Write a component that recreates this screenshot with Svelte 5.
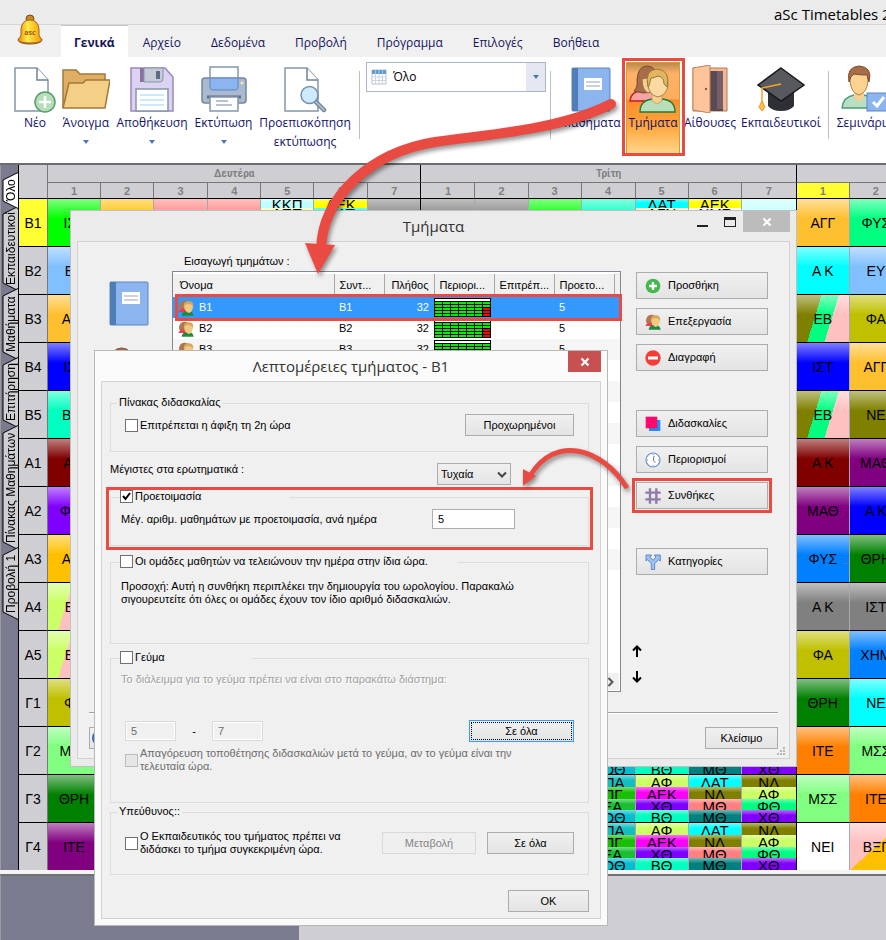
<script>
  const menu = ['Γενικά', 'Αρχείο', 'Δεδομένα', 'Προβολή', 'Πρόγραμμα', 'Επιλογές', 'Βοήθεια'];

  const sideTabs = [
    { label: 'Όλο', h: 37, active: true },
    { label: 'Εκπαιδευτικοί', h: 85 },
    { label: 'Μαθήματα', h: 72 },
    { label: 'Επιτήρηση', h: 71 },
    { label: 'Πίνακας Μαθημάτων', h: 125 },
    { label: 'Προβολή 1', h: 73 }
  ];

  const colWidths = [30, 53, 53, 54, 53, 53, 54, 53, 54, 53, 53, 54, 53, 53, 55, 53, 53];
  const hours = [1, 2, 3, 4, 5, 6, 7, 1, 2, 3, 4, 5, 6, 7, 1, 2];

  const c = {
    amber: '#ffc030', lime: '#00ff00', sky: '#80c0ff', blue: '#0000ff', mint: '#00ffc0', maroon: '#800000',
    violet: '#8000ff', gold: '#ffc000', olive: '#808000', mustard: '#c0c000', pale: '#80ff80', green: '#008000',
    purple: '#800080', spring: '#00ff80', cyan: '#00ffff', azure: '#0080ff', gray: '#808080', orange: '#ff8000',
    white: '#ffffff', pink: '#ffc0c0', rose: '#ff8080', teal: '#008080', yellow: '#ffff00', magenta: '#ff00ff', chartreuse: '#ccff66'
  };
  const stripes = `linear-gradient(107deg, ${c.olive} 37%, ${c.spring} 37%, ${c.spring} 63%, ${c.pink} 63%)`;
  const halves = `linear-gradient(107deg, ${c.chartreuse} 37%, ${c.pink} 37%)`;
  const corner = `linear-gradient(to bottom right, ${c.pink} 50%, ${c.gold} 50%)`;

  const quad = [
    [['ΦΠΑ', '#10c0c0'], ['ΑΠΓ', '#18c000'], ['ΓΕΑ', '#18c030'], ['ΦΟΘ', '#00c0d0']],
    [['ΑΦ', c.chartreuse], ['ΑΕΚ', c.magenta], ['ΧΘ', c.violet], ['ΒΘ', c.mint]],
    [['ΛΑΤ', c.cyan], ['ΝΛ', c.olive], ['ΜΘ', c.rose], ['ΜΘ', c.teal]],
    [['ΝΛ', c.olive], ['ΑΦ', c.chartreuse], ['ΦΘ', c.spring], ['ΧΘ', c.violet]]
  ];
  const five = (a, b) => [a, b, ['', c.gray], ['', c.gray], ['', c.gray]];
  const firstRow = [
    ['', c.gold], ['', c.rose], ['', c.rose],
    five(['ΚΚΠ', '#c0ffff'], ['ΑΕΠ', '#ffff99']),
    five(['ΑΕΚ', c.yellow], ['ΛΑΤ', c.cyan]),
    ['', c.gray], ['', c.gray], ['', c.gray], ['', '#00ff00'], ['', '#00ffc0'],
    five(['ΛΑΤ', c.cyan], ['ΑΓΝ', '#ffff99']),
    five(['ΑΕΚ', c.yellow], ['ΝΜΣ', c.white]),
    ['', '#c0ffff']
  ];
  const plain = Array.from({ length: 13 }, () => ['', '#ceced3']);
  const quads = [...plain.slice(0, 9), ...quad];

  const rows = [
    { name: 'B1', first: ['ΙΣΤ', c.lime], mid: firstRow, last: [['ΑΓΓ', c.amber], ['ΦΥΣ', c.spring]], active: true },
    { name: 'B2', first: ['ΕΥ', c.sky], mid: plain, last: [['Α Κ', c.cyan], ['ΕΥ', c.sky]] },
    { name: 'B3', first: ['ΑΓΓ', c.amber], mid: plain, last: [['ΕΒ', stripes], ['ΦΑ', c.mustard]] },
    { name: 'B4', first: ['ΙΣΤ', c.blue], mid: plain, last: [['ΙΣΤ', c.blue], ['ΑΓΓ', c.amber]] },
    { name: 'B5', first: ['ΒΙΟ', c.mint], mid: plain, last: [['ΕΒ', stripes], ['ΝΕ', c.olive]] },
    { name: 'A1', first: ['Α Κ', c.maroon], mid: plain, last: [['Α Κ', c.maroon], ['ΜΑΘ', c.purple]] },
    { name: 'A2', first: ['ΦΥΣ', c.violet], mid: plain, last: [['ΜΑΘ', c.purple], ['Α Κ', c.blue]] },
    { name: 'A3', first: ['ΑΓΓ', c.gold], mid: plain, last: [['ΦΥΣ', c.azure], ['ΘΡΗ', c.green]] },
    { name: 'A4', first: ['ΕΒ', halves], mid: plain, last: [['Α Κ', c.gray], ['ΙΣΤ', c.gray]] },
    { name: 'A5', first: ['ΕΒ', halves], mid: plain, last: [['ΦΑ', c.mustard], ['ΧΗΜ', c.azure]] },
    { name: 'Γ1', first: ['ΦΑ', c.mustard], mid: plain, last: [['ΘΡΗ', c.green], ['ΝΕ', c.cyan]] },
    { name: 'Γ2', first: ['ΜΣΣ', c.pale], mid: quads, last: [['ΙΤΕ', c.orange], ['ΜΣΣ', c.pale]] },
    { name: 'Γ3', first: ['ΘΡΗ', c.green], mid: quads, last: [['ΜΣΣ', c.pale], ['ΙΤΕ', c.orange]] },
    { name: 'Γ4', first: ['ΙΤΕ', c.purple], mid: quads, last: [['ΝΕΙ', c.white], ['ΒΞΓ', corner]] }
  ];

  const columns = ['Όνομα', 'Συντ...', 'Πλήθος', 'Περιορι...', 'Επιτρέπ...', 'Προετο...', ''];
  const classes = ['B1', 'B2', 'B3'];
  const blanks = Array.from({ length: 10 });

  const actions = [
    [['add', 'Προσθήκη'], ['people', 'Επεξεργασία'], ['remove', 'Διαγραφή']],
    [['lessons', 'Διδασκαλίες'], ['clock', 'Περιορισμοί'], ['hash', 'Συνθήκες']],
    [['fork', 'Κατηγορίες']]
  ];

  let prep = $state(true);
</script>

{#snippet art(name, size)}
  <svg class="art" width={size} height={size} viewBox="0 0 48 48" aria-hidden="true">
    {#if name === 'new' || name === 'preview'}
      <path d="M4 3h22l11 12v31H4z" fill="#fff" stroke="#8597aa" stroke-width="1.5" />
      <path d="M26 3v12h11" fill="#fff" stroke="#6f8296" stroke-width="1.5" />
      {#if name === 'new'}
        <circle cx="34" cy="37" r="10" fill="#b5dfb9" stroke="#5d9a72" stroke-width="1.5" />
        <path d="M34 31v12M28 37h12" stroke="#fff" stroke-width="2.5" />
      {:else}
        <path d="M34 36l9 9" stroke="#6d8094" stroke-width="4.5" stroke-linecap="round" />
        <path d="M34 36l9 9" stroke="#a9bacb" stroke-width="2" stroke-linecap="round" />
        <circle cx="28.500" cy="30" r="8.500" fill="#cfe9fd" stroke="#7590aa" stroke-width="1.500" />
      {/if}
    {:else if name === 'open'}
      <path d="M1 43V5h13l4 4h25v7" fill="#dfae62" stroke="#a07a3c" stroke-width="1.5" />
      <path d="M1 43l6-25h14l3-3h24l-5 28z" fill="#f4cf86" stroke="#a07a3c" stroke-width="1.5" />
    {:else if name === 'save'}
      <path d="M3 3h34l8 9v34H3z" fill="#dcd2f2" stroke="#9d86bd" stroke-width="1.5" />
      <path d="M12 3h4v14h-4z" fill="#8a709f" /><path d="M16 3h19v10q0 4-3 4H16z" fill="#c5cbd7" stroke="#8597aa" />
      <path d="M28 6h4v8h-4z" fill="#5e6d82" />
      <path d="M8 24h32v22H8z" fill="#fff" stroke="#8597aa" stroke-width="1.5" />
      <path d="M12 30h24M12 35h24M12 40h24" stroke="#bfe2fb" stroke-width="1.5" />
    {:else if name === 'print'}
      <rect x="2" y="13" width="44" height="25" rx="3" fill="#aabace" stroke="#7186a0" stroke-width="1.500" />
      <path d="M10 2h28v11H10z" fill="#fff" stroke="#8597aa" stroke-width="1.5" />
      <path d="M10 13h28v9q0 3-3 3H13q-3 0-3-3z" fill="#8cb4ee" stroke="#5d86c8" />
      <path d="M7 32h34" stroke="#5f7186" stroke-width="3" /><circle cx="42" cy="18" r="1.500" fill="#ffe9a0" />
      <path d="M10 32h28v14H10z" fill="#fff" stroke="#8597aa" stroke-width="1.5" /><path d="M16 36h12M16 40h16" stroke="#7186a0" />
    {:else if name === 'book'}
      <rect x="5" y="3" width="38" height="43" rx="1" fill="#8cb4ee" stroke="#5c86c0" />
      <path d="M5 3h6v43H5z" fill="#4f7db8" /><path d="M17 13h18v12H17z" fill="#fff" /><path d="M19 17h14M19 21h14" stroke="#b9c4d8" stroke-width="1.500" />
    {:else if name === 'class'}
      <path d="M1 36q1-10 12-10h13l-3 10z" fill="#f5a3a3" stroke="#c81820" stroke-width="1.300" />
      <path d="M5 26q4-4 3-11Q9 1 18 1q9 0 10 11l-3 15-11 1z" fill="#a76c48" stroke="#7b4a2c" />
      <path d="M13 14q5 0 8-4l2 4v12l-4 2q-6-3-6-14z" fill="#f6cf94" stroke="#9a7045" />
      <path d="M11 47q0-12 13-13l3 3h3l3-3q13 1 13 13z" fill="#b8dfb9" stroke="#1f7d33" stroke-width="1.300" />
      <path d="M23 26h10v10l-5 3-5-3z" fill="#f6cf94" stroke="#c09a55" stroke-width=".7" />
      <path d="M19 20q-1-13 10-15 10 1 10 15-1 10-10 12-9-2-10-12z" fill="#fbd9a2" stroke="#a98245" />
      <path d="M19 22Q15 5 28 4q14 1 10 18l-3-3q0-7-6-8-4 2-7 2-1 3-2 8z" fill="#e5b45f" stroke="#8d7a35" />
    {:else if name === 'door'}
      <path d="M7 3h34v43H7z" fill="#f7b891" stroke="#b07a5a" /><path d="M23 6h14v40H23z" fill="#5c4a51" /><path d="M31 6h6v38h-6z" fill="#74606a" />
      <path d="M7 3l17-3v48L7 45z" fill="#ffc49c" stroke="#bd8560" /><circle cx="20" cy="24" r="1.200" fill="#8f5f42" />
    {:else if name === 'cap'}
      <path d="M11 24h26v17q-4 5-13 5t-13-5z" fill="#2f3035" /><path d="M24 3l23 17-23 16L1 20z" fill="#58595e" stroke="#19191c" stroke-width="1.500" />
      <path d="M24 19L5 23v15" fill="none" stroke="#f5a623" stroke-width="1.500" /><path d="M5 36l3 6-3 4-3-4z" fill="#ffc04d" stroke="#e8951a" />
    {:else if name === 'seminar'}
      <path d="M1 43q1-11 12-13h10q9 1 11 13z" fill="#b8dfc4" stroke="#4d9b70" stroke-width="1.300" />
      <path d="M13 24h10v9l-5 4-5-4z" fill="#f6cf94" /><path d="M9 16q0-13 9-13t9 13q-1 12-9 14-8-2-9-14z" fill="#fbd28f" stroke="#a98245" />
      <path d="M8 17Q5 2 18 1q14 1 10 16l-2-7q-8 0-13-1-4 2-5 8z" fill="#a76c48" stroke="#7b4a2c" />
      <rect x="26" y="28" width="22" height="18" fill="#8cb4ee" stroke="#5c86c0" /><path d="M32 37l4 4 7-9" fill="none" stroke="#fff" stroke-width="3" />
    {:else if name === 'add'}
      <circle cx="24" cy="24" r="22" fill="#43b94c" /><path d="M24 12v24M12 24h24" stroke="#fff" stroke-width="7" />
    {:else if name === 'remove'}
      <circle cx="24" cy="24" r="23" fill="#f53d36" /><path d="M9 24h30" stroke="#fff" stroke-width="9" />
    {:else if name === 'people'}
      <path d="M3 22Q4 1 20 2q14 0 14 14l-6 14H6z" fill="#b0774e" /><path d="M1 36q4-10 16-10l10 10z" fill="#f03a55" />
      <path d="M11 47q1-14 17-15 17 0 19 15z" fill="#208a3c" /><path d="M18 16q2-11 14-11t13 12q0 18-13 22-13-4-14-23z" fill="#f2c983" />
      <path d="M17 20q0-16 15-16t14 16q-5-8-15-8-9 0-14 8z" fill="#d9a75c" />
    {:else if name === 'lessons'}
      <path d="M12 12h34v33H12z" fill="#1492ff" /><path d="M2 2h35v35H2z" fill="#ff0a6c" />
    {:else if name === 'clock'}
      <circle cx="24" cy="24" r="21" fill="#fff" stroke="#6b8fc8" stroke-width="3.500" /><path d="M27 11l-2 14 6 7" fill="none" stroke="#55789f" stroke-width="3" />
      <path d="M24 6v3M24 39v3M6 24h3M39 24h3" stroke="#6b8fc8" stroke-width="3" />
    {:else if name === 'hash'}
      <path d="M15 1v46M34 1v46M1 14h46M1 34h46" stroke="#8f7aa8" stroke-width="7" />
    {:else if name === 'fork'}
      <path d="M19 47V29L8 17l-5 4V3h17l-5 6 9 10 9-10-5-6h18v18l-6-4-11 12v18z" fill="#9cc3f3" stroke="#4f79b5" stroke-width="2.500" />
    {/if}
  </svg>
{/snippet}

{#snippet tool(name, label, w, drop)}
  <button class="tool" style:width="{w}px">
    {@render art(name, 48)}
    <span>{label}</span>
    {#if drop}<i class="caret"></i>{/if}
  </button>
{/snippet}

{#snippet cell(data, edge)}
  <td class:edge>
    {#if Array.isArray(data[0])}
      <div class="stack" class:dense={data.length > 4}>
        {#each data as [t, bg]}<span style:background="linear-gradient(#ffffff70, #ffffff00 45%), {bg}">{t}</span>{/each}
      </div>
    {:else}
      <div class="slot" style:background="linear-gradient(#ffffff80, #ffffff00 42%), {data[1]}">{data[0]}</div>
    {/if}
  </td>
{/snippet}

<div class="app">
  <header class="titlebar">aSc Timetables 2</header>
  <button class="bell" aria-label="aSc">
    <svg width="28" height="32" viewBox="0 0 28 32">
      <defs>
        <linearGradient id="brass"><stop offset="0" stop-color="#f08a00" /><stop offset=".4" stop-color="#ffe94a" /><stop offset="1" stop-color="#f59a00" /></linearGradient>
      </defs>
      <ellipse cx="14" cy="26" rx="12" ry="4" fill="#f0900c" stroke="#8a4a20" />
      <circle cx="14" cy="5" r="4" fill="#c98a1c" stroke="#7a4a14" />
      <path d="M5 15q1-9 9-9t9 9v6q1 3 3 5-2 3-12 3T2 26q2-2 3-5z" fill="url(#brass)" stroke="#a0641e" />
      <text x="14" y="21" text-anchor="middle" font-size="7" font-weight="bold" fill="#a05a10">asc</text>
    </svg>
  </button>
  <nav class="menu">
    {#each menu as m, i}<button class:active={i === 0}>{m}</button>{/each}
  </nav>

  <section class="ribbon">
    {@render tool('new', 'Νέο', 46, false)}
    {@render tool('open', 'Άνοιγμα', 50, true)}
    {@render tool('save', 'Αποθήκευση', 76, true)}
    {@render tool('print', 'Εκτύπωση', 61, true)}
    {@render tool('preview', 'Προεπισκόπηση εκτύπωσης', 96, false)}
    <i class="rule"></i>
    <button class="view">
      <svg width="16" height="16" viewBox="0 0 16 16" aria-hidden="true">
        <path d="M1 1h14v14H1z" fill="#fff" stroke="#b4c1cf" /><path d="M1 1h14v4H1z" fill="#5f9bd5" />
        <path d="M1 8h14M1 11.500h14M4.500 1v14M8 1v14M11.500 1v14" stroke="#c0ccd8" stroke-width=".8" />
      </svg>
      <span>Όλο</span>
      <b><i class="caret"></i></b>
    </button>
    <i class="rule near"></i>
    {@render tool('book', 'Μαθήματα', 65, false)}
    <div class="hot">{@render tool('class', 'Τμήματα', 52, false)}</div>
    {@render tool('door', 'Αίθουσες', 54, false)}
    {@render tool('cap', 'Εκπαιδευτικοί', 82, false)}
    <i class="rule"></i>
    {@render tool('seminar', 'Σεμινάρια', 60, false)}
  </section>

  <main class="board">
    <div class="side">
      {#each sideTabs as t}
        <button class:active={t.active} style:height="{t.h}px">
          <svg width="16" height={t.h}>
            <path d="M16 0.500L1 8V{t.h - 8}L16 {t.h - 0.5}" fill={t.active ? '#fff' : '#ceced3'} stroke="#000" />
          </svg>
          <span>{t.label}</span>
        </button>
      {/each}
    </div>
    <div class="sheet">
      <table class="timetable">
        <colgroup>{#each colWidths as w}<col style:width="{w}px" />{/each}</colgroup>
        <thead>
          <tr class="days"><th rowspan="2" class="head"></th><th colspan="7" class="edge">Δευτέρα</th><th colspan="7" class="edge">Τρίτη</th><th colspan="2"></th></tr>
          <tr class="hours">{#each hours as h, i}<th class:edge={i === 6 || i === 13} class:now={i === 14}>{h}</th>{/each}</tr>
        </thead>
        <tbody>
          {#each rows as r}
            <tr>
              <th class:now={r.active}>{r.name}</th>
              {@render cell(r.first, false)}
              {#each r.mid as m, i}{@render cell(m, i === 5 || i === 12)}{/each}
              {#each r.last as l}{@render cell(l, false)}{/each}
            </tr>
          {/each}
        </tbody>
      </table>
    </div>
  </main>
  <footer class="panes"><div></div><div></div></footer>

  <section class="win classes" role="dialog" aria-label="Τμήματα">
    <div class="bar">
      <h2>Τμήματα</h2>
      <button class="ctl min" aria-label="Min"><i></i></button>
      <button class="ctl max" aria-label="Max"><i></i></button>
      <button class="ctl close" aria-label="Close"><svg width="10" height="10" viewBox="0 0 10 10"><path d="M1.500 1.500l7 7M8.500 1.500l-7 7" stroke="#fff" stroke-width="2.200" /></svg></button>
    </div>
    <div class="body">
      <div class="main">
        <div class="pics">{@render art('book', 48)}{@render art('seminar', 44)}</div>
        <div class="listcol">
          <p>Εισαγωγή τμημάτων :</p>
          <div class="list">
            <table>
              <thead><tr>{#each columns as h}<th>{h}</th>{/each}</tr></thead>
              <tbody>
                {#each classes as n, i}
                  <tr class:selected={i === 0}>
                    <td><span class="nm">{@render art('people', 16)}{n}</span></td>
                    <td>{n}</td>
                    <td class="num">32</td>
                    <td class="chart">
                      <svg width="57" height="19" shape-rendering="crispEdges">
                        <rect width="57" height="19" fill="#000" />
                        <rect x="1" y="1" width="55" height="2" fill="#fff" />
                        {#each [0, 1, 2, 3, 4, 5, 6] as x}
                          {#each [0, 1, 2, 3, 4] as y}
                            <rect x={1 + x * 8} y={4 + y * 3} width="7" height="2" fill={x === 6 && y > 1 ? '#f00' : '#00f000'} />
                          {/each}
                        {/each}
                      </svg>
                    </td>
                    <td></td>
                    <td>5</td>
                    <td></td>
                  </tr>
                {/each}
                {#each blanks as _}<tr>{#each columns as _c}<td></td>{/each}</tr>{/each}
              </tbody>
            </table>
            <div class="scroll">
              <svg width="8" height="10" viewBox="0 0 8 10"><path d="M1.500 1l4 4-4 4" fill="none" stroke="#555" stroke-width="2" /></svg>
            </div>
          </div>
        </div>
        <div class="acts">
          {#each actions as group}
            <div class="group">
              {#each group as [ic, label]}<button class="btn">{@render art(ic, 16)}<span>{label}</span></button>{/each}
            </div>
          {/each}
          <div class="move">
            <button aria-label="Up"><svg width="10" height="12" viewBox="0 0 10 12"><path d="M5 12V2M1 5.500l4-4 4 4" fill="none" stroke="#000" stroke-width="2" /></svg></button>
            <button aria-label="Down"><svg width="10" height="12" viewBox="0 0 10 12"><path d="M5 0v10M1 6.500l4 4 4-4" fill="none" stroke="#000" stroke-width="2" /></svg></button>
          </div>
        </div>
      </div>
      <div class="foot">
        <button class="btn help" aria-label="Help"><svg width="16" height="16"><circle cx="8" cy="8" r="7" fill="#cfe2fa" stroke="#3a6ab8" stroke-width="2" /></svg></button>
        <button class="btn">Κλείσιμο</button>
      </div>
      <svg class="grip" width="8" height="8" shape-rendering="crispEdges"><path d="M6 0h2v2h-2zM3 3h2v2h-2zM6 3h2v2h-2zM0 6h2v2h-2zM3 6h2v2h-2zM6 6h2v2h-2z" fill="#b8b8b8" /></svg>
    </div>
  </section>

  <section class="win details" role="dialog" aria-label="Λεπτομέρειες τμήματος - B1">
    <div class="bar">
      <h2>Λεπτομέρειες τμήματος - B1</h2>
      <button class="ctl close" aria-label="Close"><svg width="10" height="10" viewBox="0 0 10 10"><path d="M1.500 1.500l7 7M8.500 1.500l-7 7" stroke="#fff" stroke-width="2.200" /></svg></button>
    </div>
    <form class="body" onsubmit={(e) => e.preventDefault()}>
      <fieldset class="table">
        <legend>Πίνακας διδασκαλίας</legend>
        <div class="row">
          <label><input type="checkbox" />Επιτρέπεται η άφιξη τη 2η ώρα</label>
          <button class="btn w109" type="button">Προχωρημένοι</button>
        </div>
      </fieldset>
      <div class="row pick">
        <label for="max">Μέγιστες στα ερωτηματικά :</label>
        <span class="sel">
          <select id="max"><option>Τυχαία</option></select>
          <svg width="10" height="8" viewBox="0 0 10 8"><path d="M1 1.500l4 4 4-4" fill="none" stroke="#444" stroke-width="2" /></svg>
        </span>
      </div>
      <fieldset class="prep">
        <legend class="check"><label><input type="checkbox" bind:checked={prep} />Προετοιμασία</label></legend>
        <div class="row">
          <label for="cnt">Μέγ. αριθμ. μαθημάτων με προετοιμασία, ανά ημέρα</label>
          <input id="cnt" type="text" value="5" />
        </div>
      </fieldset>
      <fieldset class="finish">
        <legend class="check"><label><input type="checkbox" />Οι ομάδες μαθητών να τελειώνουν την ημέρα στην ίδια ώρα.</label></legend>
        <p>Προσοχή: Αυτή η συνθήκη περιπλέκει την δημιουργία του ωρολογίου. Παρακαλώ<br />σιγουρευτείτε ότι όλες οι ομάδες έχουν τον ίδιο αριθμό διδασκαλιών.</p>
      </fieldset>
      <fieldset class="lunch">
        <legend class="check"><label><input type="checkbox" />Γεύμα</label></legend>
        <p>Το διάλειμμα για το γεύμα πρέπει να είναι στο παρακάτω διάστημα:</p>
        <div class="row span">
          <input type="text" value="5" disabled aria-label="Από" /><span>-</span><input type="text" value="7" disabled aria-label="Έως" />
          <button class="btn focus w105" type="button">Σε όλα</button>
        </div>
        <label class="off"><input type="checkbox" disabled /><span>Απαγόρευση τοποθέτησης διδασκαλιών μετά το γεύμα, αν το γεύμα είναι την<br />τελευταία ώρα.</span></label>
      </fieldset>
      <fieldset class="boss">
        <legend>Υπεύθυνος::</legend>
        <div class="row">
          <label><input type="checkbox" /><span>Ο Εκπαιδευτικός του τμήματος πρέπει να<br />διδάσκει το τμήμα συγκεκριμένη ώρα.</span></label>
          <button class="btn w94" type="button" disabled>Μεταβολή</button>
          <button class="btn w87" type="button">Σε όλα</button>
        </div>
      </fieldset>
      <button class="btn ok">OK</button>
    </form>
  </section>

  <svg class="notes" aria-hidden="true">
    <g fill="none" stroke="#e94b43" stroke-width="3">
      <rect x="623.500" y="59.500" width="60" height="95" />
      <rect x="176.500" y="295.500" width="444" height="24" />
      <rect x="107.500" y="488.500" width="484" height="60" />
      <rect x="633.500" y="479.500" width="137" height="32" />
    </g>
    <g class="arrows">
      <path d="M611 104C560 130 490 134 435 142C372 152 322 196 321 250" fill="none" stroke="#e94b43" stroke-width="10" stroke-linecap="round" />
      <path d="M305 243l30 2-17 29z" fill="#e94b43" />
      <path d="M627 488C602 448 555 434 530 476" fill="none" stroke="#e94b43" stroke-width="5" />
      <path d="M523 469l13 7-13 10z" fill="#e94b43" />
    </g>
  </svg>
</div>

<style>
  :global(body) { margin: 0; }
  .app { position: relative; display: flex; flex-direction: column; min-height: 100vh; overflow: hidden; background: #fff; font: 12px/16px "Open Sans", "Noto Sans", sans-serif; color: #000; }
  .app :global(*) { box-sizing: border-box; }
  button { font: inherit; color: inherit; margin: 0; padding: 0; border: 0; background: none; white-space: nowrap; }
  svg { display: block; flex: none; }
  p, h2 { margin: 0; font-weight: normal; }

  .titlebar { height: 25px; padding: 4px 0 0 774px; background: #ebebeb; border-bottom: 1px solid #d5d5d5; font-size: 15px; line-height: 20px; white-space: nowrap; overflow: hidden; }
  .bell { position: absolute; left: 16px; top: 14px; }
  .menu { display: flex; height: 32px; padding-left: 61px; background: #f0f0f0; color: #14145c; }
  .menu button { padding: 4px 15px 0; }
  .menu .active { background: #fff; border-top: 1px solid #c4c4c4; font-weight: bold; padding: 3px 13px 0; }

  .ribbon { display: flex; gap: 3px; height: 106px; padding: 7px 0 0 12px; color: #10106c; overflow: hidden; }
  .tool { flex: none; display: flex; flex-direction: column; align-items: center; white-space: normal; line-height: 19px; padding-top: 1px; }
  .tool span { display: block; width: max-content; max-width: 96px; text-align: center; }
  .caret { border: 3px solid transparent; border-top: 4px solid #4a78b8; border-bottom: 0; }
  .tool .caret { margin-top: 8px; }
  .rule { flex: none; width: 1px; height: 68px; margin: 7px 3px 0; background: #c0c0c0; }
  .near { margin: 7px 4px 0 1px; }
  .view { flex: none; display: flex; align-items: center; width: 180px; height: 30px; margin-top: -2px; padding-left: 4px; border: 1px solid #a9b4c8; background: #fff; color: #000; text-align: left; }
  .view span { flex: 1; padding-left: 6px; }
  .view b { display: grid; place-items: center; width: 19px; height: 28px; background: #e4e8f2; }
  .hot { flex: none; height: 92px; margin-top: -2px; padding-top: 1px; border: 1px solid #e09a20; background: linear-gradient(#b98a50, #ffb268 12%, #ffad5e 40%, #ff8a2c 41%, #ffa63c 70%, #ffd68a); }

  .board { display: flex; height: 707px; border-top: 2px solid #6c6c6c; background: #7b7b8f; overflow: hidden; }
  .side { flex: none; width: 18px; padding: 7px 0 0 2px; border-left: 1px solid #9a9a9a; }
  .side button { position: relative; display: block; width: 15px; margin-bottom: -3px; font: 12px/14px "Liberation Sans", sans-serif; }
  .side svg { position: absolute; left: -1px; top: 0; }
  .side span { position: absolute; inset: 0; display: flex; align-items: center; justify-content: center; writing-mode: vertical-rl; transform: rotate(180deg); }
  .side .active { z-index: 1; }
  .sheet { flex: 1; min-width: 0; overflow: hidden; background: #ceced3; }
  .timetable { width: 885px; table-layout: fixed; border-collapse: separate; border-spacing: 0; font: 14px/16px "Liberation Sans", Arial, sans-serif; }
  .timetable th { padding: 0; font-weight: normal; background: #ceced3; border-right: 1px solid #777; border-bottom: 1px solid #000; }
  .timetable td { padding: 0; height: 48px; border-right: 1px solid #a8a8b0; border-bottom: 1px solid #000; }
  .timetable tbody th { border-left: 1px solid #000; height: 48px; }
  .timetable .head { border-left: 1px solid #000; }
  .timetable .days th { height: 18px; color: #808080; font: bold 10px/16px Roboto, sans-serif; }
  .timetable .days th:not(.head) { border-bottom-color: #777; }
  .timetable .hours th { height: 16px; color: #808080; font: bold 11px/14px "Liberation Sans", sans-serif; }
  .timetable .edge { border-right-color: #000 !important; }
  .timetable .now { background: #ffff33; }
  .slot { display: flex; align-items: center; justify-content: center; height: 47px; }
  .stack { display: flex; flex-direction: column; height: 47px; overflow: hidden; font-size: 15px; }
  .stack span { flex: 1; min-height: 0; overflow: hidden; text-align: center; line-height: 15px; }
  .dense span { line-height: 12px; }
  .panes { display: flex; flex: 1; min-height: 70px; border-top: 4px solid #f4f4f4; background: #ceced3; }
  .panes div { border-top: 2px solid #707070; }
  .panes div:first-child { width: 299px; background: #7b7b8f; border-left: 1px solid #9a9a9a; }
  .panes div:last-child { flex: 1; }

  .win { position: absolute; display: flex; flex-direction: column; border: 1px solid #c0c0c0; font: 11px/13px "Liberation Sans", Tahoma, sans-serif; }
  .bar { position: relative; height: 30px; flex: none; }
  .bar h2 { text-align: center; font: 15px/20px "Open Sans", sans-serif; color: #333; padding-top: 5px; }
  .ctl { position: absolute; top: 0; display: grid; place-items: center; height: 21px; }
  .body { flex: 1; background: #f0f0f0; border: 1px solid #d2d2d2; }
  .btn { display: flex; align-items: center; justify-content: center; height: 22px; border: 1px solid #acacac; background: linear-gradient(#f0f0f0, #e4e4e4); }

  .classes { left: 70px; top: 210px; width: 727px; height: 557px; padding: 0 6px 7px; background: #ebebeb; }
  .classes .close { right: 0; width: 47px; background: #bcbcbc; }
  .min { right: 82px; width: 12px; }
  .min i { width: 11px; height: 2px; margin-top: 8px; background: #222; }
  .max { right: 54px; width: 13px; }
  .max i { width: 12px; height: 10px; border: 1px solid #222; border-top-width: 3px; }
  .classes .body { position: relative; padding: 13px 11px 0; }
  .main { display: flex; height: 458px; border-bottom: 1px solid #a0a0a0; box-shadow: 0 1px #fff; }
  .pics { width: 83px; padding: 24px 0 0 16px; display: flex; flex-direction: column; gap: 20px; }
  .listcol { width: 449px; }
  .listcol p { padding-left: 12px; height: 16px; }
  .list { display: flex; flex-direction: column; height: 421px; border: 1px solid #828790; background: #fff; }
  .list table { width: 447px; table-layout: fixed; border-collapse: collapse; }
  .list th { height: 24px; padding: 0 5px 0 5px; border-right: 1px solid #a8a8a8; border-top: 2px solid #fff; background: #f0f0f0; font-weight: normal; text-align: left; white-space: nowrap; width: 60px; }
  .list th:first-child { width: 161px; padding-left: 7px; }
  .list th:nth-child(2), .list th:nth-child(3) { width: 50px; }
  .list th:nth-child(3), .num { text-align: right; }
  .list th:last-child { width: auto; border: 0; padding: 0; }
  .list td { height: 21px; padding: 0 5px; }
  .list tbody tr:nth-child(odd) { background: #f5f5f5; }
  .list tbody tr.selected:first-child { background: #3399ff; color: #fff; }
  .list td:first-child { padding-left: 5px; }
  .list .chart { padding: 0; }
  .nm { display: flex; align-items: center; gap: 5px; }
  .scroll { display: flex; align-items: center; justify-content: flex-end; height: 17px; margin: auto 1px 1px 0; padding-right: 4px; background: #f0f0f0; }
  .acts { width: 132px; margin: 17px 0 0 15px; }
  .group { display: flex; flex-direction: column; gap: 9px; margin-bottom: 39px; }
  .group .btn { height: 27px; justify-content: flex-start; padding-left: 8px; gap: 7px; }
  .move { display: flex; flex-direction: column; align-items: flex-start; gap: 14px; margin: 70px 0 0 -4px; }
  .foot { display: flex; justify-content: space-between; padding-top: 14px; }
  .foot .btn { width: 73px; }
  .foot .help { width: 22px; }
  .grip { position: absolute; right: 4px; bottom: 3px; }

  .details { left: 94px; top: 350px; width: 514px; height: 576px; padding: 0 6px 6px; background: #fafafa; border-color: #b8b8b8; }
  .details .close { right: 0; width: 33px; background: #c75050; }
  .details .body { padding: 14px 11px 0 8px; }
  fieldset { margin: 0; padding: 0; border: 1px solid #dcdcdc; min-width: 0; }
  legend { margin-left: -8px; padding: 0 2px; height: 14px; white-space: nowrap; }
  legend.check { margin-left: -1px; padding: 0; }
  label { display: flex; align-items: center; gap: 2px; white-space: nowrap; }
  input[type="checkbox"] { appearance: none; flex: none; width: 13px; height: 13px; margin: 0; border: 1px solid #707070; background: #fff; }
  input[type="checkbox"]:checked { background: #fff url("data:image/svg+xml,%3Csvg xmlns='http://www.w3.org/2000/svg' viewBox='0 0 11 11'%3E%3Cpath d='M2 5l2.500 3L9 2' fill='none' stroke='black' stroke-width='2'/%3E%3C/svg%3E") center / 11px; }
  input[type="checkbox"]:disabled { border-color: #bcbcbc; background: #e6e6e6; }
  input[type="text"] { width: 83px; height: 20px; padding: 0 5px; border: 1px solid #abadb3; background: #fff; font: inherit; }
  input[type="text"]:disabled { width: 51px; border-color: #d9d9d9; box-shadow: inset 0 0 0 1px #fff; background: #f0f0f0; color: #6d6d6d; }
  .row { display: flex; align-items: center; }
  .row .btn { margin-left: auto; }
  .w109 { width: 109px; }
  .w105 { width: 105px; }
  .w94 { width: 94px; }
  .w87 { width: 87px; }
  .table { height: 56px; padding: 4px 14px 0; }
  .pick { margin: 11px 0 5px; align-items: flex-start; justify-content: space-between; padding-right: 78px; }
  .sel { position: relative; }
  .sel svg { position: absolute; right: 4px; top: 8px; pointer-events: none; }
  select { display: block; appearance: none; width: 74px; height: 22px; padding: 0 3px; border: 1px solid #acacac; border-radius: 0; background: linear-gradient(#f0f0f0, #e5e5e5); font: inherit; color: #000; }
  .prep { height: 56px; padding: 5px 73px 0 10px; }
  .prep legend { width: 170px; }
  .prep .row { justify-content: space-between; }
  .finish { height: 89px; margin-top: 9px; padding: 11px 10px 0; }
  .finish legend { width: 338px; }
  .finish p, .lunch p { white-space: nowrap; }
  .lunch { height: 152px; margin-top: 7px; padding: 8px 14px 0; }
  .lunch legend.check { width: 132px; margin-left: -5px; }
  .lunch p { margin-left: -4px; color: #a0a0a0; text-shadow: 1px 1px #fff; }
  .span { margin: 34px 0 5px; }
  .span span { width: 36px; text-align: center; }
  .focus { border: 1px solid #3399ff; outline: 1px dotted #000; outline-offset: -3px; }
  .off { color: #6d6d6d; }
  .boss { height: 70px; margin-top: 2px; padding: 11px 14px 0; }
  .boss .btn + .btn { margin-left: 11px; }
  .btn:disabled { border-color: #d9d9d9; background: #efefef; color: #838383; }
  .ok { width: 81px; margin: 15px 0 0 auto; }

  .notes { position: absolute; left: 0; top: 0; width: 100%; height: 100%; pointer-events: none; }
  .arrows { filter: drop-shadow(2px 3px 2px #00000066); }
</style>
